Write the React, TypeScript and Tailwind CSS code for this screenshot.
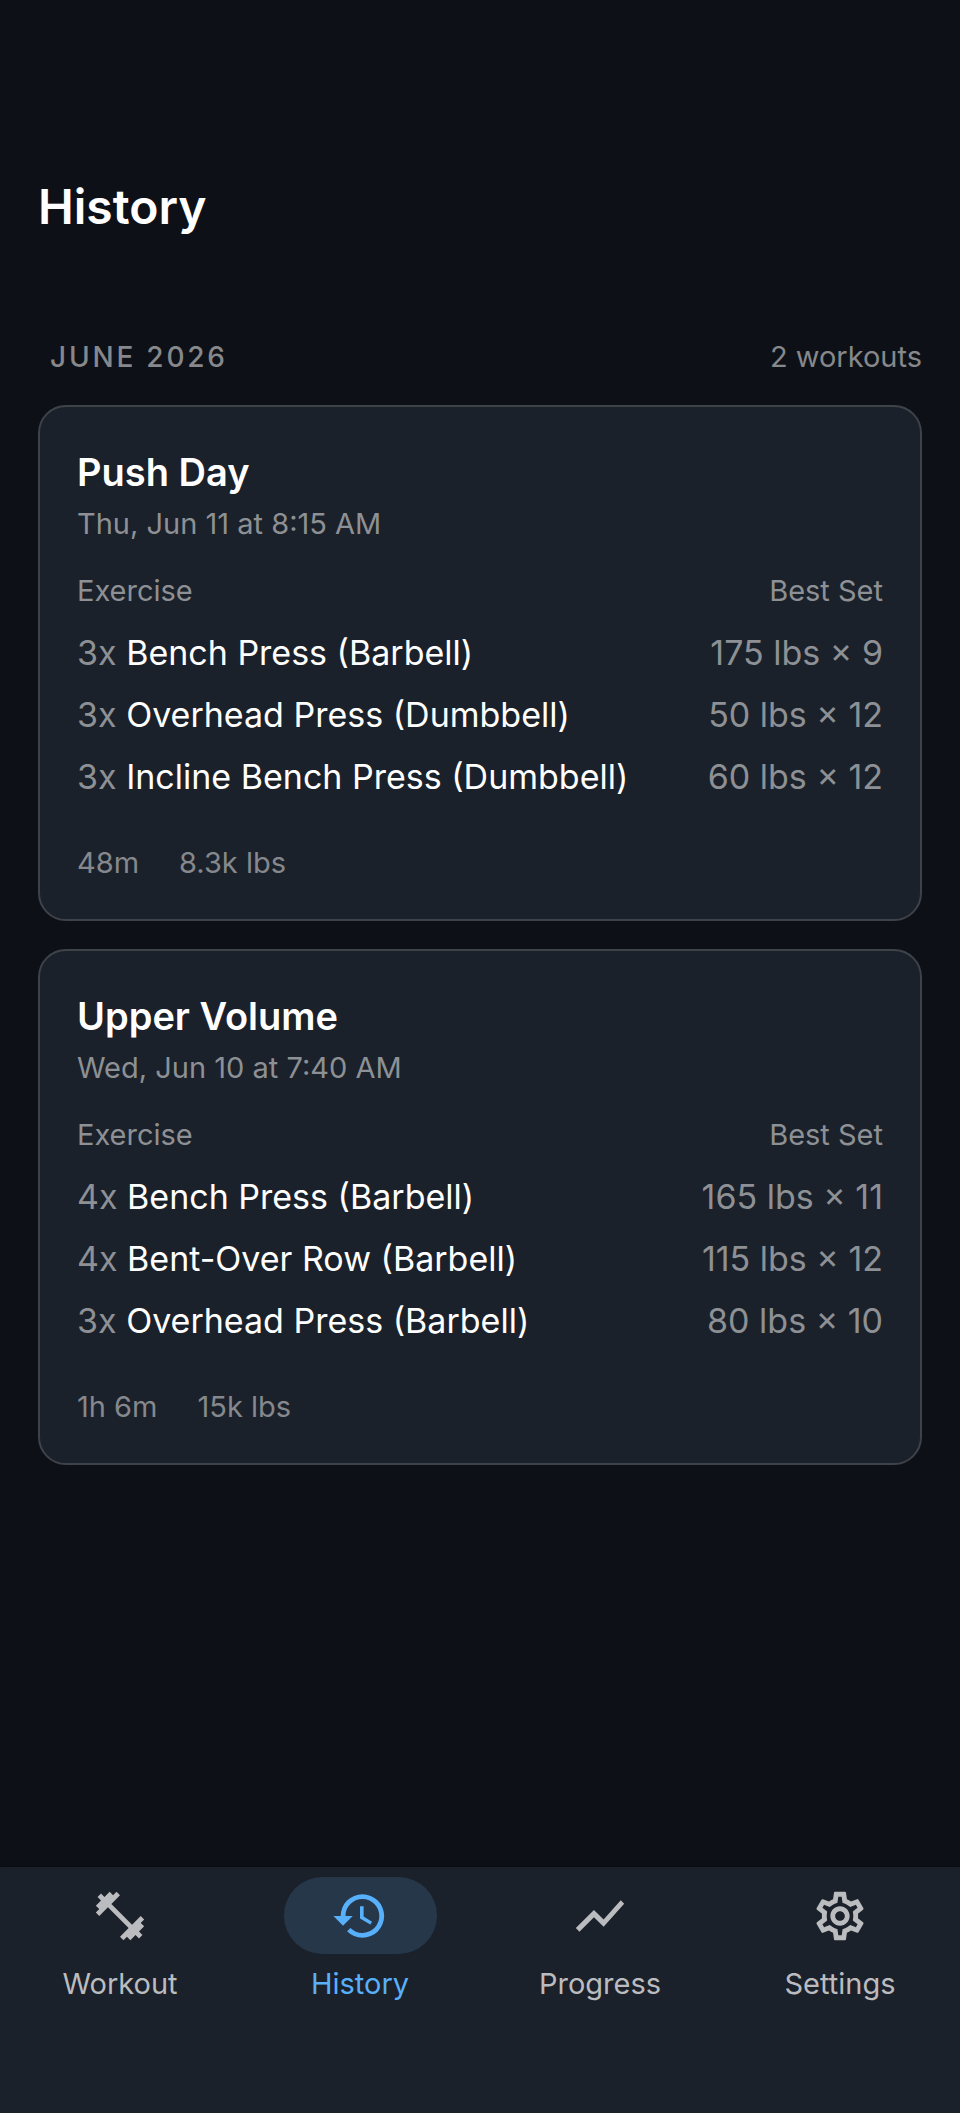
import type { IconType } from 'react-icons';
import { MdFitnessCenter, MdHistory, MdOutlineSettings, MdShowChart } from 'react-icons/md';

interface Exercise {
  sets: number;
  name: string;
  bestSet: string;
}

interface Workout {
  id: number;
  title: string;
  date: string;
  duration: string;
  volume: string;
  exercises: Exercise[];
}

const workouts: Workout[] = [
  {
    id: 1,
    title: 'Push Day',
    date: 'Thu, Jun 11 at 8:15 AM',
    duration: '48m',
    volume: '8.3k lbs',
    exercises: [
      { sets: 3, name: 'Bench Press (Barbell)', bestSet: '175 lbs × 9' },
      { sets: 3, name: 'Overhead Press (Dumbbell)', bestSet: '50 lbs × 12' },
      { sets: 3, name: 'Incline Bench Press (Dumbbell)', bestSet: '60 lbs × 12' },
    ],
  },
  {
    id: 2,
    title: 'Upper Volume',
    date: 'Wed, Jun 10 at 7:40 AM',
    duration: '1h 6m',
    volume: '15k lbs',
    exercises: [
      { sets: 4, name: 'Bench Press (Barbell)', bestSet: '165 lbs × 11' },
      { sets: 4, name: 'Bent-Over Row (Barbell)', bestSet: '115 lbs × 12' },
      { sets: 3, name: 'Overhead Press (Barbell)', bestSet: '80 lbs × 10' },
    ],
  },
];

const tabs: { label: string; icon: IconType; active?: boolean }[] = [
  { label: 'Workout', icon: MdFitnessCenter },
  { label: 'History', icon: MdHistory, active: true },
  { label: 'Progress', icon: MdShowChart },
  { label: 'Settings', icon: MdOutlineSettings },
];

function WorkoutCard({ workout }: { workout: Workout }) {
  return (
    <article className="rounded-[28px] border-2 border-[#3e4249] bg-[#1b212a] px-[37px] pt-10 pb-[37px]">
      <h3 className="text-[38px] leading-[50px] font-semibold text-white">{workout.title}</h3>
      <p className="mt-2 text-[29px] leading-[38px] text-[#8d9094]">{workout.date}</p>

      <table className="mt-[29px] w-full text-[#8d9094]">
        <thead>
          <tr className="text-[29px] leading-[38px]">
            <th scope="col" className="pb-3 text-left font-normal">Exercise</th>
            <th scope="col" className="pb-3 text-right font-normal">Best Set</th>
          </tr>
        </thead>
        <tbody>
          {workout.exercises.map((ex) => (
            <tr key={ex.name} className="text-[34px] leading-[38px]">
              <td className="py-3">
                {ex.sets}x <span className="text-white">{ex.name}</span>
              </td>
              <td className="py-3 text-right whitespace-nowrap">{ex.bestSet}</td>
            </tr>
          ))}
        </tbody>
      </table>

      {/* Totals */}
      <div className="mt-9 flex gap-10 text-[29px] leading-[38px] text-[#85888d]">
        <span>{workout.duration}</span>
        <span>{workout.volume}</span>
      </div>
    </article>
  );
}

function BottomNav() {
  return (
    <nav className="grid grid-cols-4 bg-[#1b212a] pt-2.5 pb-[110px] shadow-[0_-1px_3px_rgba(0,0,0,0.4)]">
      {tabs.map(({ label, icon: Icon, active }) => (
        <button
          key={label}
          type="button"
          aria-current={active ? 'page' : undefined}
          className={`flex flex-col items-center gap-[11px] ${active ? 'text-[#58b0fa]' : 'text-[#bbbcbf]'}`}
        >
          <span className={`flex h-[77px] w-[153px] items-center justify-center rounded-full ${active ? 'bg-[#26374a]' : ''}`}>
            <Icon className="size-[58px]" />
          </span>
          <span className="text-[29px] leading-[38px]">{label}</span>
        </button>
      ))}
    </nav>
  );
}

export default function App() {
  return (
    <div className="flex min-h-screen flex-col bg-[#0d1117] font-['Inter',sans-serif]">
      <header className="px-[38px] pt-[179px]">
        <h1 className="text-[48px] leading-[56px] font-semibold text-white">History</h1>
      </header>

      <main className="grow px-[38px] pt-[103px]">
        <div className="flex items-baseline justify-between pb-[29px] pl-3 text-[29px] leading-[38px] text-[#86888b]">
          <h2 className="text-[28px] font-medium tracking-widest uppercase">June 2026</h2>
          <span>2 workouts</span>
        </div>
        <div className="flex flex-col gap-7">
          {workouts.map((workout) => (
            <WorkoutCard key={workout.id} workout={workout} />
          ))}
        </div>
      </main>

      <BottomNav />
    </div>
  );
}
